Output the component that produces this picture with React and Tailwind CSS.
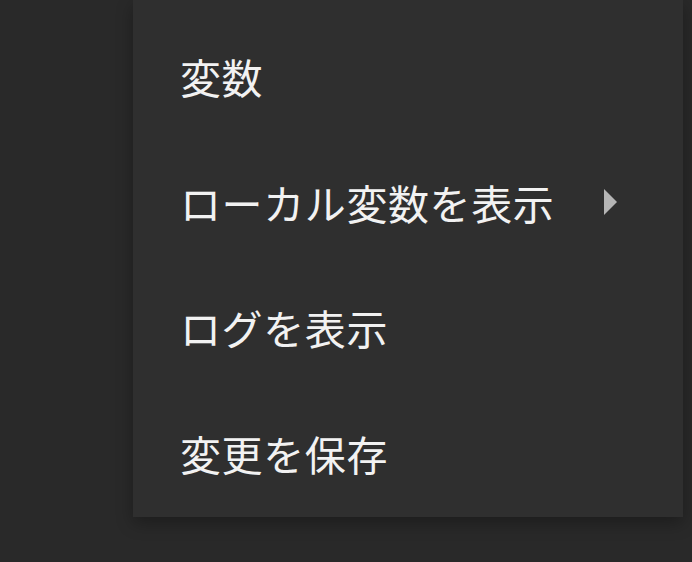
export default function App() {
  const items = ["変数", "ローカル変数を表示", "ログを表示", "変更を保存"];
  return (
    <div
      className="w-[692px] h-[562px] bg-[#292929] overflow-hidden flex items-start"
      style={{ fontFamily: '"Noto Sans CJK JP", "Noto Sans", sans-serif' }}
    >
      <div className="ml-[133px] w-[550px] h-[517px] bg-[#2f2f2f] pt-[14px] shadow-[0_6px_16px_rgba(0,0,0,0.3)]">
        {items.map((t, i) => (
          <div key={i} className="h-[125.5px] flex items-center pl-[47px] pr-[66px]">
            <span className="text-[41px] leading-none text-[#f2f2f2] tracking-[0.6px]">{t}</span>
            {i === 1 && (
              <svg className="ml-auto" width="13" height="26" viewBox="0 0 13 26">
                <polygon points="0,0 13,13 0,26" fill="#b5b5b5" />
              </svg>
            )}
          </div>
        ))}
      </div>
    </div>
  );
}
